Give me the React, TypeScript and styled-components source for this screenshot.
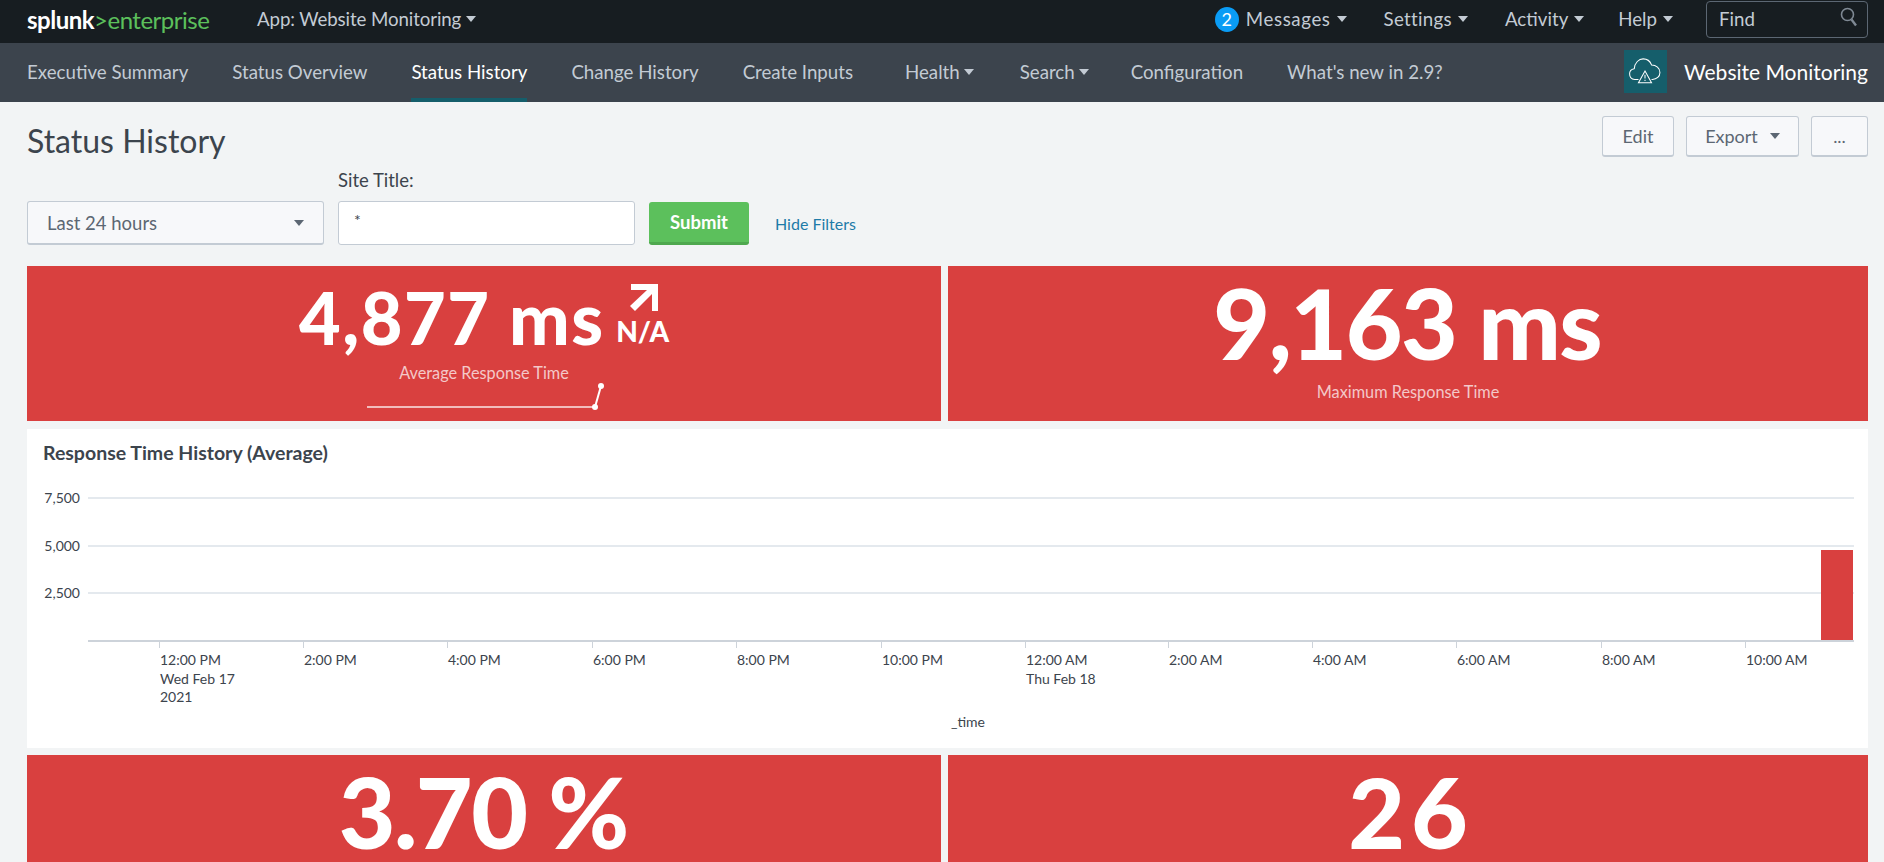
import React from 'react'
import styled, { createGlobalStyle } from 'styled-components'

const GlobalStyle = createGlobalStyle`
    html, body {
        margin: 0;
        height: 100%;
        overflow: hidden;
        background: #f2f4f5;
        font-family: Lato, "Liberation Sans", sans-serif;
    }
`

const Page = styled.div`
    width: 1884px;
    height: 862px;
    overflow: hidden;
`

const TopBar = styled.header`
    height: 43px;
    box-sizing: border-box;
    padding: 0 16px 5px 27px;
    background: #171d21;
    display: flex;
    align-items: center;
    color: #c3cbd4;
    font-size: 18.7px;
`
const Logo = styled.div`
    width: 230px;
    font-size: 24px;
    letter-spacing: -0.5px;
    color: #5cc05c;
    b {
        color: #fff;
    }
`
const TopMenu = styled.div`
    display: flex;
    align-items: center;
    gap: 5px;
    letter-spacing: -0.1px;
`
const TopRight = styled.div`
    margin-left: auto;
    display: flex;
    align-items: center;
`
const Badge = styled.span`
    width: 24px;
    height: 25px;
    border-radius: 50%;
    background: #0a9cf5;
    color: #fff;
    font-size: 18px;
    display: flex;
    align-items: center;
    justify-content: center;
    margin-right: 7px;
`
const TopItem = styled.div<{ $gap: number; $tracking?: number }>`
    display: flex;
    align-items: center;
    gap: 6px;
    letter-spacing: ${(p) => p.$tracking ?? 0}px;
    margin-right: ${(p) => p.$gap}px;
`
const Caret = styled.span<{ $color?: string }>`
    display: inline-block;
    width: 0;
    height: 0;
    border-left: 5px solid transparent;
    border-right: 5px solid transparent;
    border-top: 6px solid ${(p) => p.$color ?? 'currentColor'};
`
const FindBox = styled.div`
    width: 162px;
    height: 37px;
    box-sizing: border-box;
    border: 1px solid #5c6773;
    border-radius: 4px;
    padding: 0 9px 0 12px;
    display: flex;
    align-items: center;
    justify-content: space-between;
    svg {
        margin-top: -4px;
    }
`

const NavBar = styled.nav`
    height: 59px;
    box-sizing: border-box;
    padding: 0 16px 0 27px;
    background: #3c444d;
    display: flex;
    align-items: stretch;
    gap: 44px;
    color: #c3cbd4;
    font-size: 18.7px;
`
const NavItem = styled.div<{ $active?: boolean; $left?: number }>`
    display: flex;
    align-items: center;
    gap: 4px;
    box-sizing: border-box;
    margin-left: ${(p) => p.$left ?? 0}px;
    padding-top: ${(p) => (p.$active ? 2 : 0)}px;
    padding-bottom: ${(p) => (p.$active ? 0 : 2)}px;
    color: ${(p) => (p.$active ? '#fff' : 'inherit')};
    border-bottom: ${(p) => (p.$active ? '4px solid #155e6b' : 'none')};
`
const Brand = styled.div`
    margin-left: auto;
    padding-bottom: 3px;
    display: flex;
    align-items: center;
    gap: 17px;
    color: #fff;
    font-size: 21px;
`
const BrandIcon = styled.div`
    width: 43px;
    height: 43px;
    background: #155e6b;
    display: flex;
    align-items: center;
    justify-content: center;
`

const Content = styled.main`
    padding: 14px 16px 0 27px;
`
const TitleRow = styled.div`
    height: 41px;
    display: flex;
    align-items: center;
    justify-content: space-between;
`
const Title = styled.h1`
    margin: 8px 0 0;
    font-size: 32px;
    font-weight: 400;
    color: #3c444d;
`
const Actions = styled.div`
    display: flex;
    gap: 12px;
`
const ActionButton = styled.button<{ $width: number }>`
    width: ${(p) => p.$width}px;
    height: 41px;
    box-sizing: border-box;
    border: 1px solid #c3cbd4;
    border-bottom-width: 2px;
    border-radius: 3px;
    background: #f7f8fa;
    color: #5c6773;
    font: inherit;
    font-size: 18px;
    display: flex;
    align-items: center;
    justify-content: center;
    gap: 12px;
    padding: 0;
`

const FilterRow = styled.div`
    margin-top: 13px;
    display: flex;
    align-items: flex-end;
    gap: 14px;
`
const Field = styled.div`
    display: flex;
    flex-direction: column;
    gap: 11px;
`
const FieldLabel = styled.label`
    font-size: 18.5px;
    line-height: 20px;
    color: #3c444d;
`
const Select = styled.div`
    width: 297px;
    height: 44px;
    box-sizing: border-box;
    border: 1px solid #c3cbd4;
    border-bottom-width: 2px;
    border-radius: 3px;
    background: #f7f8fa;
    color: #5c6773;
    font-size: 18.5px;
    padding: 0 19px;
    display: flex;
    align-items: center;
    justify-content: space-between;
`
const TextInput = styled.div`
    width: 297px;
    height: 44px;
    box-sizing: border-box;
    border: 1px solid #c3cbd4;
    border-radius: 3px;
    background: #fff;
    color: #3c444d;
    font-size: 16px;
    padding: 8px 15px;
`
const SubmitButton = styled.button`
    width: 100px;
    height: 43px;
    box-sizing: border-box;
    border: none;
    border-bottom: 3px solid #4fa84f;
    border-radius: 3px;
    background: #5cc05c;
    color: #fff;
    font: inherit;
    font-size: 18.5px;
    font-weight: 700;
    padding: 0;
`
const HideFilters = styled.a`
    margin-left: 12px;
    height: 43px;
    display: flex;
    align-items: center;
    font-size: 16px;
    color: #1e7ba8;
`

const StatRow = styled.div<{ $top: number }>`
    margin-top: ${(p) => p.$top}px;
    display: grid;
    grid-template-columns: 914px 920px;
    gap: 7px;
`
const StatPanel = styled.section`
    height: 155px;
    background: #d9403f;
    color: #fff;
    display: flex;
    flex-direction: column;
    align-items: center;
`
const ValueRow = styled.div<{ $top: number }>`
    margin-top: ${(p) => p.$top}px;
    display: flex;
    align-items: flex-end;
    gap: 13px;
`
const Value = styled.div<{ $size: number; $tracking: number }>`
    font-size: ${(p) => p.$size}px;
    letter-spacing: ${(p) => p.$tracking}px;
    margin-right: ${(p) => -p.$tracking}px;
    font-weight: 900;
    line-height: 1;
`
const Trend = styled.div`
    display: flex;
    flex-direction: column;
    align-items: center;
    font-size: 28px;
    font-weight: 900;
    line-height: 28px;
    margin-bottom: 8px;
    gap: 5px;
    svg {
        margin-left: 3px;
    }
`
const StatLabel = styled.div<{ $top: number }>`
    margin-top: ${(p) => p.$top}px;
    font-size: 16.3px;
    line-height: 18px;
    color: rgba(255, 255, 255, 0.72);
`

const ChartPanel = styled.section`
    margin-top: 8px;
    height: 319px;
    background: #fff;
    display: flex;
    flex-direction: column;
`
const ChartTitle = styled.h2`
    margin: 0;
    height: 48px;
    box-sizing: border-box;
    padding: 14px 16px 0;
    font-size: 19.5px;
    line-height: 20px;
    font-weight: 700;
    color: #3c444d;
`
const ChartText = styled.text`
    font-size: 14px;
    fill: #3c444d;
`

interface TickType {
    x: number
    lines: string[]
}

const ticks: TickType[] = [
    { x: 132, lines: ['12:00 PM', 'Wed Feb 17', '2021'] },
    { x: 276, lines: ['2:00 PM'] },
    { x: 420, lines: ['4:00 PM'] },
    { x: 565, lines: ['6:00 PM'] },
    { x: 709, lines: ['8:00 PM'] },
    { x: 854, lines: ['10:00 PM'] },
    { x: 998, lines: ['12:00 AM', 'Thu Feb 18'] },
    { x: 1141, lines: ['2:00 AM'] },
    { x: 1285, lines: ['4:00 AM'] },
    { x: 1429, lines: ['6:00 AM'] },
    { x: 1574, lines: ['8:00 AM'] },
    { x: 1718, lines: ['10:00 AM'] },
]

const grid = [
    { y: 21, label: '7,500' },
    { y: 69, label: '5,000' },
    { y: 116, label: '2,500' },
]

const ResponseChart: React.FC = () => (
    <svg width={1841} height={271}>
        {grid.map((g) => (
            <g key={g.label}>
                <line x1={61} x2={1827} y1={g.y} y2={g.y} stroke="#e4e9ee" strokeWidth={2} />
                <ChartText x={53} y={g.y + 5} textAnchor="end">
                    {g.label}
                </ChartText>
            </g>
        ))}
        <rect x={1794} y={73} width={32} height={90} fill="#d9403f" />
        <line x1={61} x2={1827} y1={164} y2={164} stroke="#cdd3da" strokeWidth={2} />
        {ticks.map((t) => (
            <g key={t.x}>
                <line x1={t.x + 0.5} x2={t.x + 0.5} y1={164} y2={171} stroke="#cdd3da" />
                {t.lines.map((l, i) => (
                    <ChartText key={l} x={t.x + 1} y={188 + i * 18.5}>
                        {l}
                    </ChartText>
                ))}
            </g>
        ))}
        <ChartText x={924} y={250}>
            _time
        </ChartText>
    </svg>
)

const Sparkline: React.FC = () => (
    <svg width={240} height={30} viewBox="0 0 240 30">
        <line x1={3} x2={231} y1={25} y2={25} stroke="rgba(255, 255, 255, 0.65)" strokeWidth={2} />
        <line x1={231} x2={237} y1={25} y2={4} stroke="#fff" strokeWidth={2} />
        <circle cx={231} cy={25} r={3} fill="#fff" />
        <circle cx={237} cy={4} r={3} fill="#fff" />
    </svg>
)

const CloudIcon: React.FC = () => (
    <svg width={34} height={28} viewBox="0 0 36 30" fill="none" stroke="#fff" strokeWidth={1.1}>
        <path d="M11 24 H7 C3 24 1.500 21 1.500 18 C1.500 15 3.500 13 6.500 12.500 C7 6 11.500 2 16 2 C20.500 2 23.500 4.500 25 8.500 C30 8.500 34 12 34 16.500 C34 21 30.500 24 26 24 H25" />
        <path d="M18 15 L25 27.500 H11 Z" />
        <path d="M18 19 V23 M18 24.500 V25.800" />
    </svg>
)

const TrendArrow: React.FC = () => (
    <svg width={28} height={28} viewBox="0 0 28 28">
        <path d="M1 0 H28 V27 H22 V10 L5 27 L0 22 L17 6 H1 Z" fill="#fff" />
    </svg>
)

const SearchIcon: React.FC = () => (
    <svg width={18} height={20} viewBox="0 0 18 20" fill="none" stroke="#7f8994" strokeWidth={1.6}>
        <circle cx={7.500} cy={7.500} r={6} />
        <path d="M11.500 12.500 L16 18.500" strokeWidth={2.4} />
    </svg>
)

const navItems = ['Executive Summary', 'Status Overview', 'Status History', 'Change History', 'Create Inputs']

export default function App(): React.ReactElement {
    return (
        <Page>
            <GlobalStyle />
            <TopBar>
                <Logo>
                    <b>splunk</b>&gt;enterprise
                </Logo>
                <TopMenu>
                    App: Website Monitoring <Caret />
                </TopMenu>
                <TopRight>
                    <Badge>2</Badge>
                    <TopItem $gap={37} $tracking={0.6}>
                        Messages <Caret />
                    </TopItem>
                    <TopItem $gap={37} $tracking={0.3}>
                        Settings <Caret />
                    </TopItem>
                    <TopItem $gap={34}>
                        Activity <Caret />
                    </TopItem>
                    <TopItem $gap={33}>
                        Help <Caret />
                    </TopItem>
                    <FindBox>
                        Find
                        <SearchIcon />
                    </FindBox>
                </TopRight>
            </TopBar>
            <NavBar>
                {navItems.map((item) => (
                    <NavItem key={item} $active={item === 'Status History'}>
                        {item}
                    </NavItem>
                ))}
                <NavItem $left={8}>
                    Health <Caret />
                </NavItem>
                <NavItem $left={2}>
                    Search <Caret />
                </NavItem>
                <NavItem $left={-2}>Configuration</NavItem>
                <NavItem>What's new in 2.9?</NavItem>
                <Brand>
                    <BrandIcon>
                        <CloudIcon />
                    </BrandIcon>
                    Website Monitoring
                </Brand>
            </NavBar>
            <Content>
                <TitleRow>
                    <Title>Status History</Title>
                    <Actions>
                        <ActionButton $width={72}>Edit</ActionButton>
                        <ActionButton $width={113}>
                            Export <Caret />
                        </ActionButton>
                        <ActionButton $width={57}>...</ActionButton>
                    </Actions>
                </TitleRow>
                <FilterRow>
                    <Select>
                        Last 24 hours <Caret $color="#5c6773" />
                    </Select>
                    <Field>
                        <FieldLabel>Site Title:</FieldLabel>
                        <TextInput>*</TextInput>
                    </Field>
                    <SubmitButton>Submit</SubmitButton>
                    <HideFilters>Hide Filters</HideFilters>
                </FilterRow>
                <StatRow $top={21}>
                    <StatPanel>
                        <ValueRow $top={15}>
                            <Value $size={72} $tracking={1.5}>
                                4,877 ms
                            </Value>
                            <Trend>
                                <TrendArrow />
                                N/A
                            </Trend>
                        </ValueRow>
                        <StatLabel $top={11}>Average Response Time</StatLabel>
                        <Sparkline />
                    </StatPanel>
                    <StatPanel>
                        <ValueRow $top={7}>
                            <Value $size={98} $tracking={-1.5}>
                                9,163 ms
                            </Value>
                        </ValueRow>
                        <StatLabel $top={12}>Maximum Response Time</StatLabel>
                    </StatPanel>
                </StatRow>
                <ChartPanel>
                    <ChartTitle>Response Time History (Average)</ChartTitle>
                    <ResponseChart />
                </ChartPanel>
                <StatRow $top={7}>
                    <StatPanel>
                        <ValueRow $top={7}>
                            <Value $size={98} $tracking={-1.5}>
                                3.70 %
                            </Value>
                        </ValueRow>
                    </StatPanel>
                    <StatPanel>
                        <ValueRow $top={7}>
                            <Value $size={98} $tracking={6}>
                                26
                            </Value>
                        </ValueRow>
                    </StatPanel>
                </StatRow>
            </Content>
        </Page>
    )
}
